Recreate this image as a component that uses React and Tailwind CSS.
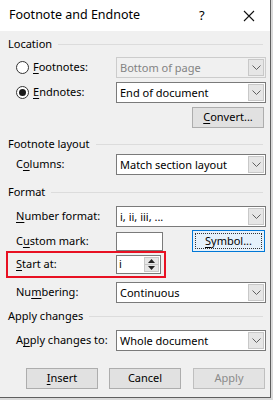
import React from 'react';

const U = ({ children }) => <span className="underline underline-offset-2">{children}</span>;

const Chevron = () => (
  <svg width="9" height="6" viewBox="0 0 9 6" className="block">
    <path d="M0.5 0.5 L4.5 4.5 L8.5 0.5" fill="none" stroke="#606060" strokeWidth="1" />
  </svg>
);

const Select = ({ value, disabled }) => (
  <div
    className={
      'flex h-[21px] w-[150px] items-stretch border ' +
      (disabled ? 'border-[#cccccc] bg-[#f0f0f0] text-[#838383]' : 'border-[#7a7a7a] bg-white text-black')
    }
  >
    <div className="flex flex-1 items-center pl-[3px] leading-none">{value}</div>
    <div className="m-px flex w-[16px] items-center justify-center border border-[#c8c8c8] bg-[#e6e6e6]">
      <Chevron />
    </div>
  </div>
);

const Header = ({ children, className = '' }) => (
  <div className={'flex h-[16px] items-center gap-[6px] pl-[8px] pr-[7px] ' + className}>
    <span className="whitespace-nowrap">{children}</span>
    <div className="h-px flex-1 bg-[#dcdcdc]" />
  </div>
);

const Row = ({ label, children, className = '' }) => (
  <div className={'flex items-center pl-[16px] ' + className}>
    <div className="w-[100px] whitespace-nowrap">{label}</div>
    {children}
  </div>
);

const Radio = ({ checked }) => (
  <div className="flex h-[13px] w-[13px] items-center justify-center rounded-full border border-[#333] bg-white">
    {checked && <div className="h-[7px] w-[7px] rounded-full bg-[#1a1a1a]" />}
  </div>
);

const Button = ({ children, disabled, className = '' }) => (
  <div
    className={
      'flex h-[21px] w-[72px] items-center justify-center border ' +
      (disabled ? 'border-[#bfbfbf] bg-[#e3e3e3] text-[#8a8a8a] ' : 'border-[#adadad] bg-[#e1e1e1] ') +
      className
    }
  >
    {children}
  </div>
);

export default function App() {
  return (
    <div className="h-[400px] w-[273px] bg-[#dadada] text-[11px] text-black" style={{ fontFamily: '"Noto Sans", "Segoe UI", sans-serif' }}>
      <div className="flex h-[398px] w-[271px] flex-col border-r border-b border-[#5f5f5f] bg-[#f0f0f0]">
        {/* title bar */}
        <div className="flex h-[31px] items-center bg-white pl-[9px] text-[12.5px]">
          <span className="flex-1">Footnote and Endnote</span>
          <span className="w-[44px] text-[13px]">?</span>
          <svg width="12" height="12" viewBox="0 0 12 12" className="mr-[15px]">
            <path d="M1 1 L11 11 M11 1 L1 11" stroke="#111" strokeWidth="1.1" />
          </svg>
        </div>

        <Header className="mt-[5px]">Location</Header>
        <div className="mt-[5px] flex items-center pl-[16px]">
          <Radio />
          <div className="w-[87px] pl-[4px]"><U>F</U>ootnotes:</div>
          <Select value="Bottom of page" disabled />
        </div>
        <div className="mt-[4px] flex items-center pl-[16px]">
          <Radio checked />
          <div className="w-[87px] pl-[4px]"><U>E</U>ndnotes:</div>
          <Select value="End of document" />
        </div>
        <div className="mt-[4px] flex justify-end pr-[6px]">
          <Button><U>C</U>onvert...</Button>
        </div>

        <Header className="mt-[8px]">Footnote layout</Header>
        <Row label={<>C<U>o</U>lumns:</>} className="mt-[2px]">
          <Select value="Match section layout" />
        </Row>

        <Header className="mt-[9px]">Format</Header>
        <Row label={<><U>N</U>umber format:</>} className="mt-[6px]">
          <Select value="i, ii, iii, ..." />
        </Row>
        <Row label={<>C<U>u</U>stom mark:</>} className="mt-[3px] h-[22px]">
          <div className="h-[19px] w-[47px] border border-[#7a7a7a] bg-white" />
          <div className="ml-[29px] flex h-[22px] w-[73px] items-center justify-center border border-[#0078d7] bg-[#e5f1fb] p-[2px]">
            <div className="flex h-full w-full items-center justify-center border border-dotted border-[#333]">
              <U>S</U>ymbol...
            </div>
          </div>
        </Row>
        <div className="ml-[6px] mt-[-1px] flex h-[27px] w-[160px] items-center border-2 border-[#e81123] pl-[8px]">
          <div className="w-[100px]"><U>S</U>tart at:</div>
          <div className="flex h-[19px] w-[45px] items-stretch border border-[#7a7a7a] bg-white">
            <div className="flex flex-1 items-center pl-[2px]">i</div>
            <div className="my-px mr-px flex w-[15px] flex-col border border-[#c8c8c8] bg-[#e6e6e6]">
              <div className="flex flex-1 items-center justify-center border-b border-[#c8c8c8]">
                <svg width="7" height="4" viewBox="0 0 7 4"><path d="M0 4 L3.5 0 L7 4 Z" fill="#222" /></svg>
              </div>
              <div className="flex flex-1 items-center justify-center">
                <svg width="7" height="4" viewBox="0 0 7 4"><path d="M0 0 L3.5 4 L7 0 Z" fill="#222" /></svg>
              </div>
            </div>
          </div>
        </div>
        <Row label={<>Nu<U>m</U>bering:</>} className="mt-[4px]">
          <Select value="Continuous" />
        </Row>

        <Header className="mt-[5px]">Apply changes</Header>
        <Row label={<>A<U>p</U>ply changes to:</>} className="mt-[6px]">
          <Select value="Whole document" />
        </Row>

        <div className="mt-[17px] flex pl-[26px]">
          <Button><U>I</U>nsert</Button>
          <Button className="ml-[11px]">Cancel</Button>
          <Button disabled className="ml-[12px]">Apply</Button>
        </div>
      </div>
    </div>
  );
}
